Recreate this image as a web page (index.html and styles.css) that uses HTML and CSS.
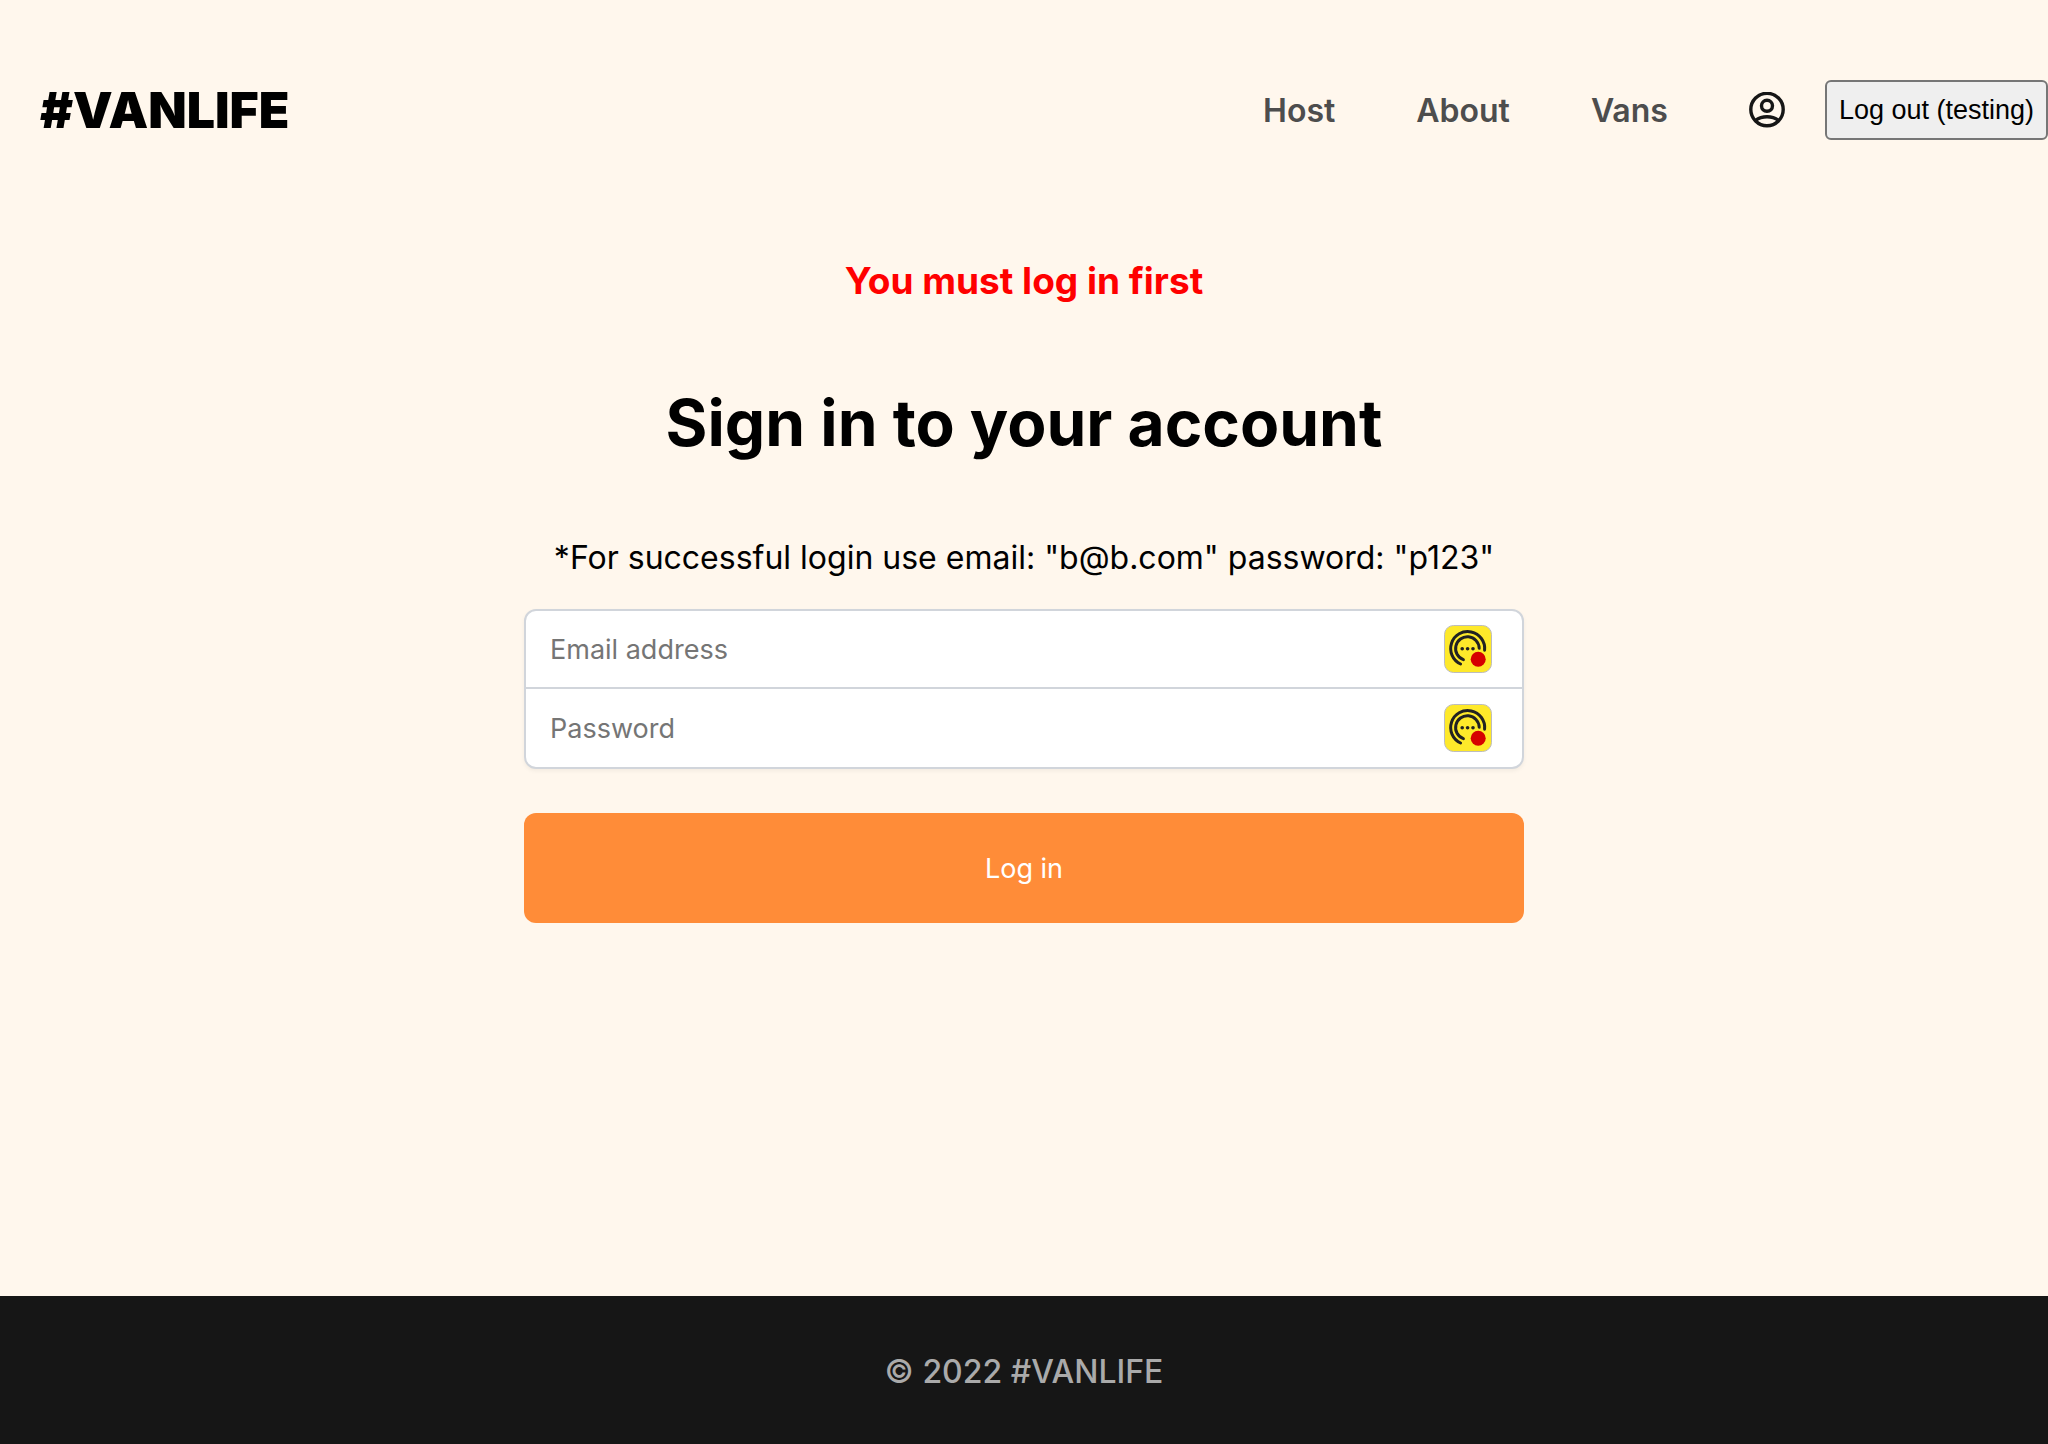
FILE: index.html
```html
<!DOCTYPE html>
<html lang="en">
<head>
  <meta charset="utf-8">
  <meta name="viewport" content="width=device-width, initial-scale=1">
  <title>#VANLIFE</title>
  <link rel="stylesheet" href="styles.css">
</head>
<body>
  <svg class="sprite" aria-hidden="true">
    <symbol id="vault" viewBox="0 0 48 48">
      <rect x="0.5" y="0.5" width="47" height="47" rx="9" fill="#fee92a" stroke="#bdbdbd"/>
      <g fill="none" stroke="#222" stroke-width="3" stroke-linecap="round">
        <path d="M16.6 39A17 17 0 1 1 40.6 25.2"/>
        <path d="M19.4 34.7A11.8 11.8 0 1 1 35.2 23.2"/>
      </g>
      <g fill="#222">
        <circle cx="18.2" cy="23.8" r="1.8"/>
        <circle cx="23.6" cy="23.8" r="1.8"/>
        <circle cx="29" cy="23.8" r="1.8"/>
      </g>
      <circle cx="34.2" cy="34.3" r="7.5" fill="#d60000"/>
    </symbol>
  </svg>
  <header class="header">
    <a class="logo" href="#">#VANLIFE</a>
    <nav class="nav">
      <a class="nav-link" href="#">Host</a>
      <a class="nav-link" href="#">About</a>
      <a class="nav-link" href="#">Vans</a>
      <a class="nav-account" href="#" aria-label="Account">
        <svg width="36" height="36" viewBox="0 0 36 36" fill="none" stroke="#161616" stroke-width="3.4">
          <circle cx="18" cy="17.5" r="16.2"/>
          <circle cx="18" cy="13.8" r="5.5"/>
          <path d="M6.5 28.4C9.5 26.2 13.5 24.8 18 24.8S26.5 26.2 29.5 28.4"/>
        </svg>
      </a>
      <button class="logout" type="button">Log out (testing)</button>
    </nav>
  </header>
  <main class="main">
    <h3 class="alert">You must log in first</h3>
    <h1 class="title">Sign in to your account</h1>
    <p class="hint">*For successful login use email: "b@b.com" password: "p123"</p>
    <form class="form">
      <div class="fields">
        <div class="field">
          <input class="input" type="email" name="email" placeholder="Email address" aria-label="Email address">
          <svg class="vault" aria-hidden="true"><use href="#vault"/></svg>
        </div>
        <div class="field">
          <input class="input" type="password" name="password" placeholder="Password" aria-label="Password">
          <svg class="vault" aria-hidden="true"><use href="#vault"/></svg>
        </div>
      </div>
      <button class="submit" type="submit">Log in</button>
    </form>
  </main>
  <footer class="footer">© 2022 #VANLIFE</footer>
</body>
</html>
```
FILE: styles.css
```css
* {
  box-sizing: border-box;
}

body {
  margin: 0;
  min-height: 100vh;
  display: flex;
  flex-direction: column;
  background: #fff7ed;
  color: #000;
  font-family: Inter, sans-serif;
  font-size: 32px;
  line-height: 41px;
}

.sprite {
  display: none;
}

.header {
  display: flex;
  align-items: center;
  justify-content: space-between;
  padding: 80px 0 80px 40px;
}

.logo {
  color: #000;
  font-size: 50px;
  font-weight: 900;
  line-height: 60px;
  text-decoration: none;
}

.nav {
  display: flex;
  align-items: center;
}

.nav-link {
  margin-right: 81px;
  color: #4d4d4d;
  font-weight: 600;
  text-decoration: none;
}

.nav-account {
  display: flex;
  margin-right: 40px;
}

.logout {
  height: 60px;
  padding: 0 12px;
  border: 2px solid #767676;
  border-radius: 6px;
  background: #efefef;
  color: #000;
  font-family: "Liberation Sans", Arial, sans-serif;
  font-size: 27px;
}

.main {
  flex: 1;
  display: flex;
  flex-direction: column;
  align-items: center;
  padding: 40px 52px;
}

.alert {
  margin: 0;
  color: #f00;
  font-size: 37px;
  font-weight: 700;
}

.title {
  margin: 83px 0 75px;
  font-size: 64px;
  font-weight: 700;
  line-height: 78px;
}

.hint {
  margin: 0 0 31px;
}

.form {
  width: 100%;
  max-width: 1000px;
}

.fields {
  margin-bottom: 44px;
  border: 2px solid #d1d5db;
  border-radius: 12px;
  background: #fff;
  box-shadow: 0 2px 4px rgba(0, 0, 0, 0.05);
  overflow: hidden;
}

.field {
  display: flex;
  align-items: center;
  height: 76px;
  padding-right: 30px;
}

.field + .field {
  height: 80px;
  border-top: 2px solid #d1d5db;
}

.input {
  flex: 1;
  min-width: 0;
  height: 100%;
  padding: 0 24px;
  border: 0;
  outline: 0;
  background: transparent;
  font-family: inherit;
  font-size: 27px;
}

.input::placeholder {
  color: #757575;
}

.vault {
  width: 48px;
  height: 48px;
}

.submit {
  width: 100%;
  height: 110px;
  border: 0;
  border-radius: 12px;
  background: #ff8c38;
  color: #fff;
  font-family: inherit;
  font-size: 27px;
}

.footer {
  padding: 55px 40px 52px;
  background: #161616;
  color: #aaa;
  font-weight: 500;
  text-align: center;
}
```
